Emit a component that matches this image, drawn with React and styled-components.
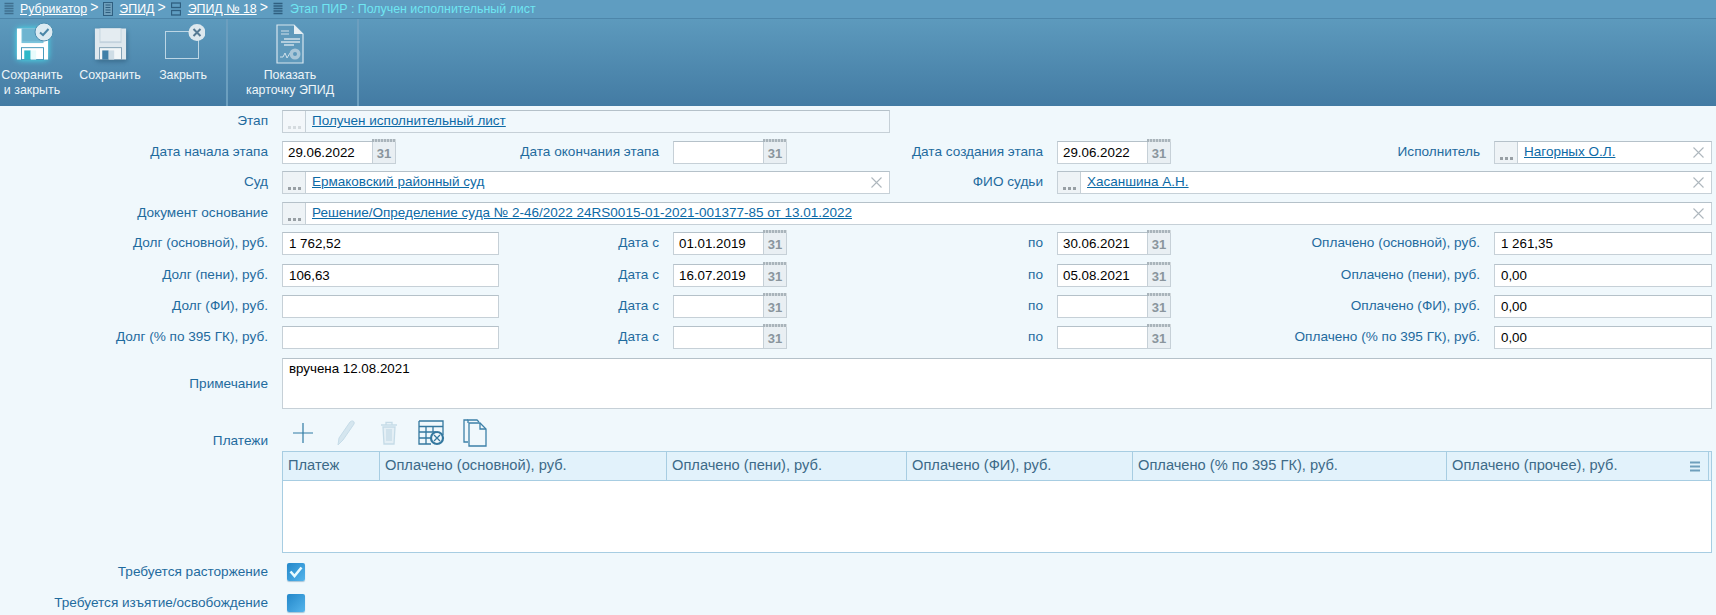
import React from 'react';
import styled, { createGlobalStyle } from 'styled-components';

const Global = createGlobalStyle`
  html, body, #root {
    margin: 0;
    height: 100%;
  }
  body {
    background: #f0f8fc;
    font-family: "Liberation Sans", Arial, sans-serif;
    overflow: hidden;
  }
`;

const Page = styled.div`
  width: 1716px;
  height: 615px;
  overflow: hidden;
`;

const Crumbs = styled.div`
  display: flex;
  align-items: center;
  height: 18px;
  padding-left: 4px;
  background: #5f9dc1;
  border-bottom: 1px solid #4d86aa;
  font-size: 12.4px;
  color: #fff;
`;

const CrumbLink = styled.a`
  color: #fff;
  text-decoration: underline;
  margin: 0 3px 0 ${props => props.$offset || 6}px;
`;

const CrumbArrow = styled.span`
  margin-right: 5px;
  font-size: 14px;
  position: relative;
  top: -2px;
`;

const CrumbCurrent = styled.span`
  color: #6fe6f2;
  margin-left: 7px;
`;

const Toolbar = styled.div`
  display: flex;
  height: 87px;
  background: linear-gradient(#5d9abd, #437ba3);
`;

const ToolGroup = styled.div`
  display: flex;
  width: ${props => props.$width}px;
  box-sizing: border-box;
  border-right: 2px solid #6c9fbf;
`;

const ToolButton = styled.div`
  width: ${props => props.$width}px;
  display: flex;
  flex-direction: column;
  align-items: center;
  color: #edf5f9;
  font-size: 12.4px;
  line-height: 15px;
  text-align: center;
  white-space: nowrap;
  cursor: pointer;
`;

const ToolIcon = styled.div`
  height: 49px;
  display: flex;
  align-items: flex-start;
  justify-content: center;
  padding-top: ${props => props.$top || 5}px;
  box-sizing: border-box;
`;

const Form = styled.div`
  display: grid;
  grid-template-columns: 282px 217px 174px 114px 270px 114px 323px 218px;
  grid-template-rows: 31px 30px 31px 30px 32px 31px 31px 32px 60px 33px 112px 31px 24px;
  padding-top: 4px;
`;

const Label = styled.label`
  grid-column: ${props => props.$col || 1};
  padding-right: 14px;
  height: 21px;
  line-height: 21px;
  font-size: 13.6px;
  color: #1f6b9e;
  text-align: right;
  white-space: nowrap;
  align-self: ${props => props.$align || 'start'};
`;

const NoteLabel = styled(Label)`
  align-self: center;
  margin-bottom: 9px;
`;

const CheckLabel = styled(Label)`
  margin-top: -2px;
`;

const PickerField = styled.div`
  grid-column: ${props => props.$span};
  width: ${props => (props.$width ? `${props.$width}px` : 'auto')};
  height: 23px;
  box-sizing: border-box;
  display: flex;
  align-items: stretch;
  position: relative;
  background: ${props => (props.$disabled ? '#f1f8fc' : '#fff')};
  border: 1px solid #c6d0d7;
  border-top-color: #b5c1c9;
`;

const PickerButton = styled.div`
  width: 23px;
  flex: none;
  display: flex;
  align-items: flex-end;
  justify-content: center;
  padding-bottom: 3px;
  box-sizing: border-box;
  background: ${props => (props.$disabled ? '#f3f7fa' : '#eef3f6')};
  border-right: 1px solid #c6d0d7;
  cursor: pointer;
`;

const LinkText = styled.a`
  margin-left: 6px;
  line-height: 20px;
  font-size: 13.5px;
  color: #0c6aa6;
  text-decoration: underline;
  white-space: nowrap;
  cursor: pointer;
`;

const Clear = styled.svg`
  position: absolute;
  right: 7px;
  top: 5px;
  width: 11px;
  height: 11px;
  cursor: pointer;
`;

const DateBox = styled.div`
  grid-column: ${props => props.$col};
  width: 114px;
  height: 23px;
  box-sizing: border-box;
  display: flex;
  position: relative;
  background: #fff;
  border: 1px solid #c6d0d7;
  border-top-color: #b5c1c9;
`;

const DateInput = styled.input`
  width: 89px;
  border: 0;
  padding: 0 0 0 5px;
  box-sizing: border-box;
  background: none;
  font: 13.33px "Liberation Sans", Arial, sans-serif;
  color: #000;
  outline: none;
`;

const CalendarButton = styled.div`
  flex: 1;
  position: relative;
  background: #e9eff3;
  border-left: 1px solid #c6d0d7;
  text-align: center;
  font-size: 13px;
  font-weight: bold;
  line-height: 24px;
  color: #8a959d;
  cursor: pointer;
  &::before {
    content: '';
    position: absolute;
    left: -1px;
    right: -1px;
    top: -3px;
    height: 3px;
    background: repeating-linear-gradient(90deg, #a9b4bb 0 2px, #d3dade 2px 3px);
  }
`;

const MoneyInput = styled.input`
  grid-column: ${props => props.$col};
  height: 23px;
  box-sizing: border-box;
  border: 1px solid #c6d0d7;
  border-top-color: #b5c1c9;
  padding: 0 0 0 6px;
  background: #fff;
  font: 13.33px "Liberation Sans", Arial, sans-serif;
  color: #000;
  outline: none;
`;

const Note = styled.textarea`
  grid-column: 2 / 9;
  height: 51px;
  box-sizing: border-box;
  border: 1px solid #c6d0d7;
  border-top-color: #b5c1c9;
  padding: 2px 6px;
  background: #fff;
  font: 13.33px "Liberation Sans", Arial, sans-serif;
  color: #000;
  resize: none;
  outline: none;
`;

const PayTools = styled.div`
  grid-column: 2 / 9;
  display: flex;
  align-items: flex-start;
  height: 33px;
  margin-left: -1px;
`;

const PayTool = styled.div`
  width: 43px;
  height: 30px;
  display: flex;
  align-items: center;
  justify-content: center;
  cursor: pointer;
`;

const Table = styled.div`
  grid-column: 2 / 9;
  height: 102px;
  box-sizing: border-box;
  background: #fff;
  border: 1px solid #a7cde2;
`;

const HeadRow = styled.div`
  display: grid;
  grid-template-columns: 97px 287px 240px 226px 314px 262px 1fr;
  height: 28px;
  background: #e2f2fb;
  border-bottom: 1px solid #a7cde2;
`;

const HeadCell = styled.div`
  position: relative;
  padding-left: 5px;
  font-size: 14.67px;
  line-height: 27px;
  color: #3d6a88;
  border-right: 1px solid #a7cde2;
  white-space: nowrap;
`;

const MenuIcon = styled.svg`
  position: absolute;
  right: 8px;
  top: 9px;
  width: 10px;
  height: 11px;
`;

const CheckBox = styled.div`
  width: 18px;
  height: 18px;
  border-radius: 2px;
  margin-left: 5px;
  display: flex;
  align-items: center;
  justify-content: center;
  background: linear-gradient(135deg, #2387c9, #55b5ec);
  box-shadow: 0 1px 1px rgba(60, 120, 160, 0.4);
  grid-column: 2;
  cursor: pointer;
`;

const FloppySvg = styled.svg`
  filter: ${props =>
    props.$glow
      ? 'drop-shadow(0 0 3px #45e4f0)'
      : 'drop-shadow(1px 2px 2px rgba(30, 70, 100, 0.45))'};
`;

const IconWrap = styled.div`
  position: relative;
  display: flex;
`;

const Badge = styled.svg`
  position: absolute;
  right: -5px;
  top: -5px;
  width: 20px;
  height: 20px;
`;

const Dots = ({ faded }) => (
  <svg width="13" height="3" viewBox="0 0 13 3">
    {[0, 5, 10].map(x => (
      <rect key={x} x={x} width="3" height="3" fill={faded ? '#d5dbdf' : '#989fa4'} />
    ))}
  </svg>
);

const Picker = ({ span, width, text, disabled, clear = true }) => (
  <PickerField $span={span} $width={width} $disabled={disabled}>
    <PickerButton $disabled={disabled}>
      <Dots faded={disabled} />
    </PickerButton>
    <LinkText>{text}</LinkText>
    {clear && (
      <Clear viewBox="0 0 11 11">
        <path d="M0.5 0.5L10.5 10.5M10.5 0.5L0.5 10.5" stroke="#aeb7bd" strokeWidth="1.1" fill="none" />
      </Clear>
    )}
  </PickerField>
);

const DateField = ({ col, value }) => (
  <DateBox $col={col}>
    <DateInput readOnly defaultValue={value} />
    <CalendarButton>31</CalendarButton>
  </DateBox>
);

const PageIcon = ({ color, shape }) => (
  <svg width="10" height="14" viewBox="0 0 10 14" fill="none">
    {shape === 'list' && (
      <path d="M0.5 1.5H9.5M0.5 4H9.5M0.5 6.5H9.5M0.5 9H9.5M0.5 11.5H9.5" stroke={color} strokeWidth="1.5" />
    )}
    {shape === 'doc' && (
      <>
        <rect x="0.5" y="0.5" width="9" height="13" fill="#6f9fbb" stroke={color} />
        <path d="M2.5 3H7.5M2.5 5.5H7.5M2.5 8H7.5M2.5 10.5H7.5" stroke={color} />
      </>
    )}
    {shape === 'split' && (
      <>
        <rect x="0.5" y="1" width="9" height="4.5" stroke={color} strokeWidth="1.3" />
        <rect x="0.5" y="8.5" width="9" height="4.5" stroke={color} strokeWidth="1.3" />
      </>
    )}
  </svg>
);

const Floppy = ({ glow }) => (
  <FloppySvg $glow={glow} width="33" height="34" viewBox="0 0 36 36">
    <path d="M1 1H35V35H1Z" fill={glow ? '#fff' : '#dfe8ee'} />
    <rect x="6" y="1" width="24" height="16" fill={glow ? '#7cc4dc' : '#c4d3de'} />
    <rect x="7" y="1" width="22" height="14" fill={glow ? '#6fb4d0' : '#e4ecf1'} />
    <rect x="6" y="22" width="24" height="13" fill={glow ? '#fff' : '#f2f6f8'} stroke={glow ? '#3a93b8' : '#7d9db2'} />
    <rect x="9" y="25" width="7" height="10" fill={glow ? '#2cb8c9' : '#3f7fa8'} />
    <rect x="16" y="25" width="6" height="10" fill={glow ? '#e8fbfc' : '#cfdde6'} />
  </FloppySvg>
);

const SaveCloseIcon = () => (
  <IconWrap>
    <Floppy glow />
    <Badge viewBox="0 0 20 20">
      <circle cx="10" cy="10" r="9" fill="#dcebf2" stroke="#4d8db0" />
      <path d="M6 10.5L9 13L14.5 7" stroke="#4b87a8" strokeWidth="2" fill="none" />
    </Badge>
  </IconWrap>
);

const CloseIcon = () => (
  <svg width="44" height="36" viewBox="0 0 44 36">
    <rect x="4.5" y="7.5" width="33" height="27" fill="none" stroke="#bcd6e5" />
    <circle cx="36" cy="8.5" r="8.5" fill="#dde8ee" />
    <path d="M32.5 5L39.5 12M39.5 5L32.5 12" stroke="#567a93" strokeWidth="2" />
  </svg>
);

const CardIcon = () => (
  <svg width="28" height="40" viewBox="0 0 28 40" fill="none">
    <path d="M1 1H18L27 10V39H1Z" fill="#5f99bb" stroke="#d6e5ee" strokeWidth="1.2" />
    <path d="M18 1V10H27Z" fill="#e6eff4" />
    <path d="M5 7H13M5 10H13" stroke="#cfe0ea" strokeWidth="1.2" />
    <path d="M8 15H24M5 18H24M8 21H18" stroke="#cfe0ea" strokeWidth="1.3" />
    <path d="M4 33L7 33L9 29L11 34L14 29" stroke="#cfe0ea" />
    <circle cx="19" cy="30" r="5.5" fill="#a9c6d8" />
    <circle cx="19" cy="30" r="2" fill="#5f99bb" />
  </svg>
);

const PlusIcon = () => (
  <svg width="20" height="20" viewBox="0 0 20 20">
    <path d="M10 0V20M0 10H20" stroke="#2f7ba3" strokeWidth="1.2" />
  </svg>
);

const PenIcon = () => (
  <svg width="20" height="26" viewBox="0 0 20 26" fill="none">
    <path d="M14 2C16 0 19 1 18 4L7 20L2 25L3 18Z" fill="#d5e6ef" stroke="#c6dce8" />
  </svg>
);

const TrashIcon = () => (
  <svg width="18" height="24" viewBox="0 0 18 24" fill="none" stroke="#c5dbe7" strokeWidth="1.3">
    <path d="M1 4H17M6 4V1.5H12V4" />
    <path d="M3 6L4 23H14L15 6Z" fill="#e4eff5" />
    <path d="M7 8V20M9 8V20M11 8V20" />
  </svg>
);

const TableCogIcon = () => (
  <svg width="27" height="26" viewBox="0 0 27 26" fill="none" stroke="#34789f" strokeWidth="1.3">
    <path d="M1 1H25V15M1 1V24H13M1 6.5H25M8 6.5V24M1 12H18M1 18H12M15 6.5V12" />
    <circle cx="19" cy="18" r="6" strokeWidth="2.2" />
    <path d="M16 15L22 21M22 15L16 21" />
  </svg>
);

const CopyIcon = () => (
  <svg width="24" height="29" viewBox="0 0 24 29" fill="none" stroke="#3c80a8" strokeWidth="1.3">
    <path d="M5 4V1H14L16 3" />
    <path d="M5 23H1V1H5" />
    <path d="M6 4H17L23 10V27H6Z" fill="#f0f8fc" />
    <path d="M17 4V10H23" />
  </svg>
);

const debtRows = [
  { label: 'Долг (основной), руб.', debt: '1 762,52', from: '01.01.2019', to: '30.06.2021', paidLabel: 'Оплачено (основной), руб.', paid: '1 261,35' },
  { label: 'Долг (пени), руб.', debt: '106,63', from: '16.07.2019', to: '05.08.2021', paidLabel: 'Оплачено (пени), руб.', paid: '0,00' },
  { label: 'Долг (ФИ), руб.', debt: '', from: '', to: '', paidLabel: 'Оплачено (ФИ), руб.', paid: '0,00' },
  { label: 'Долг (% по 395 ГК), руб.', debt: '', from: '', to: '', paidLabel: 'Оплачено (% по 395 ГК), руб.', paid: '0,00' },
];

const columns = [
  'Платеж',
  'Оплачено (основной), руб.',
  'Оплачено (пени), руб.',
  'Оплачено (ФИ), руб.',
  'Оплачено (% по 395 ГК), руб.',
  'Оплачено (прочее), руб.',
];

export default function App() {
  return (
    <Page>
      <Global />
      <Crumbs>
        <PageIcon color="#3f6f8f" shape="list" />
        <CrumbLink>Рубрикатор</CrumbLink>
        <CrumbArrow>&gt;</CrumbArrow>
        <PageIcon color="#2f5f80" shape="doc" />
        <CrumbLink>ЭПИД</CrumbLink>
        <CrumbArrow>&gt;</CrumbArrow>
        <PageIcon color="#2f5f80" shape="split" />
        <CrumbLink $offset={7}>ЭПИД № 18</CrumbLink>
        <CrumbArrow>&gt;</CrumbArrow>
        <PageIcon color="#2f5f80" shape="list" />
        <CrumbCurrent>Этап ПИР : Получен исполнительный лист</CrumbCurrent>
      </Crumbs>
      <Toolbar>
        <ToolGroup $width={228}>
          <ToolButton $width={64}>
            <ToolIcon $top={8}>
              <SaveCloseIcon />
            </ToolIcon>
            Сохранить
            <br />и закрыть
          </ToolButton>
          <ToolButton $width={92}>
            <ToolIcon $top={8}>
              <Floppy />
            </ToolIcon>
            Сохранить
          </ToolButton>
          <ToolButton $width={54}>
            <ToolIcon $top={5}>
              <CloseIcon />
            </ToolIcon>
            Закрыть
          </ToolButton>
        </ToolGroup>
        <ToolGroup $width={131}>
          <ToolButton $width={124}>
            <ToolIcon $top={5}>
              <CardIcon />
            </ToolIcon>
            Показать
            <br />
            карточку ЭПИД
          </ToolButton>
        </ToolGroup>
      </Toolbar>
      <Form>
        <Label>Этап</Label>
        <Picker span="2 / 5" width={608} text="Получен исполнительный лист" disabled clear={false} />

        <Label>Дата начала этапа</Label>
        <DateField col={2} value="29.06.2022" />
        <Label $col={3}>Дата окончания этапа</Label>
        <DateField col={4} value="" />
        <Label $col={5}>Дата создания этапа</Label>
        <DateField col={6} value="29.06.2022" />
        <Label $col={7}>Исполнитель</Label>
        <Picker span="8" text="Нагорных О.Л." />

        <Label>Суд</Label>
        <Picker span="2 / 5" width={608} text="Ермаковский районный суд" />
        <Label $col={5}>ФИО судьи</Label>
        <Picker span="6 / 9" text="Хасаншина А.Н." />

        <Label>Документ основание</Label>
        <Picker span="2 / 9" text="Решение/Определение суда № 2-46/2022 24RS0015-01-2021-001377-85 от 13.01.2022" />

        {debtRows.map(row => (
          <React.Fragment key={row.label}>
            <Label>{row.label}</Label>
            <MoneyInput $col={2} readOnly defaultValue={row.debt} />
            <Label $col={3}>Дата с</Label>
            <DateField col={4} value={row.from} />
            <Label $col={5}>по</Label>
            <DateField col={6} value={row.to} />
            <Label $col={7}>{row.paidLabel}</Label>
            <MoneyInput $col={8} readOnly defaultValue={row.paid} />
          </React.Fragment>
        ))}

        <NoteLabel>Примечание</NoteLabel>
        <Note readOnly defaultValue="вручена 12.08.2021" />

        <Label $align="end">Платежи</Label>
        <PayTools>
          <PayTool><PlusIcon /></PayTool>
          <PayTool><PenIcon /></PayTool>
          <PayTool><TrashIcon /></PayTool>
          <PayTool><TableCogIcon /></PayTool>
          <PayTool><CopyIcon /></PayTool>
        </PayTools>

        <Table>
          <HeadRow>
            {columns.map((title, i) => (
              <HeadCell key={title}>
                {title}
                {i === columns.length - 1 && (
                  <MenuIcon viewBox="0 0 10 11">
                    <path d="M0 1.5H10M0 5.5H10M0 9.5H10" stroke="#6f9fbc" strokeWidth="2" />
                  </MenuIcon>
                )}
              </HeadCell>
            ))}
          </HeadRow>
        </Table>

        <CheckLabel>Требуется расторжение</CheckLabel>
        <CheckBox>
          <svg width="14" height="12" viewBox="0 0 14 12">
            <path d="M1.5 5.5L5.5 10L12.5 1.5" stroke="#e8fbff" strokeWidth="2.6" fill="none" />
          </svg>
        </CheckBox>

        <CheckLabel>Требуется изъятие/освобождение</CheckLabel>
        <CheckBox />
      </Form>
    </Page>
  );
}
